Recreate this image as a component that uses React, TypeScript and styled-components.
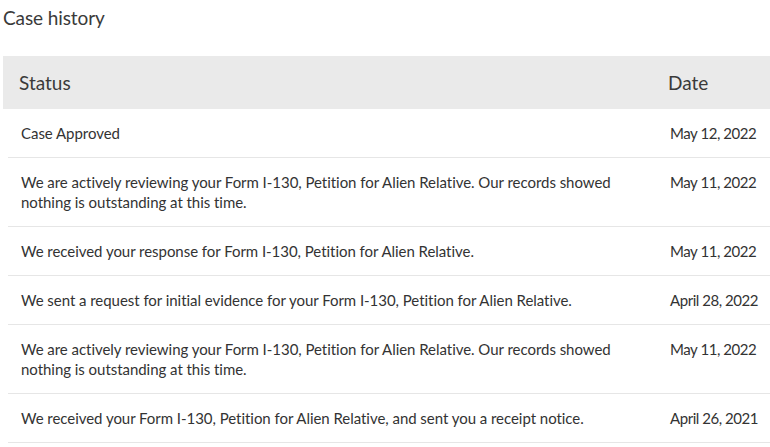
import React from "react";
import styled, { createGlobalStyle } from "styled-components";

const GlobalStyle = createGlobalStyle`
  body {
    margin: 0;
    background: #ffffff;
    font-family: Lato, "Open Sans", sans-serif;
    color: #333333;
  }
`;

const Page = styled.div`
  padding-left: 3px;
  overflow: hidden;
`;

const Title = styled.h2`
  margin: 6px 0 26px 0;
  font-size: 19px;
  line-height: 24px;
  font-weight: 400;
  color: #3a3a3a;
  letter-spacing: -0.1px;
`;

const Table = styled.div`
  display: flex;
  flex-direction: column;
`;

const HeaderRow = styled.div`
  display: grid;
  grid-template-columns: 1fr 102px;
  align-items: center;
  height: 53px;
  padding-left: 16px;
  background: #eaeaea;
  font-size: 19px;
  color: #3a3a3a;
`;

const Row = styled.div`
  display: grid;
  grid-template-columns: 1fr 100px;
  align-items: start;
  margin-left: 5px;
  padding: 14px 0 14px 13px;
  border-bottom: 1px solid #e6e6e6;
  font-size: 15px;
  line-height: 20px;
  letter-spacing: -0.04px;
  color: #333333;
`;

const Status = styled.div`
  padding-right: 40px;
`;

const DateCell = styled.div`
  white-space: nowrap;
  letter-spacing: -0.45px;
`;

const rows: [string, string][] = [
  ["Case Approved", "May 12, 2022"],
  [
    "We are actively reviewing your Form I-130, Petition for Alien Relative. Our records showed nothing is outstanding at this time.",
    "May 11, 2022",
  ],
  ["We received your response for Form I-130, Petition for Alien Relative.", "May 11, 2022"],
  ["We sent a request for initial evidence for your Form I-130, Petition for Alien Relative.", "April 28, 2022"],
  [
    "We are actively reviewing your Form I-130, Petition for Alien Relative. Our records showed nothing is outstanding at this time.",
    "May 11, 2022",
  ],
  ["We received your Form I-130, Petition for Alien Relative, and sent you a receipt notice.", "April 26, 2021"],
];

export default function App() {
  return (
    <>
      <GlobalStyle />
      <Page>
        <Title>Case history</Title>
        <Table>
          <HeaderRow>
            <span>Status</span>
            <span>Date</span>
          </HeaderRow>
          {rows.map(([s, d], i) => (
            <Row key={i}>
              <Status>{s}</Status>
              <DateCell>{d}</DateCell>
            </Row>
          ))}
        </Table>
      </Page>
    </>
  );
}
